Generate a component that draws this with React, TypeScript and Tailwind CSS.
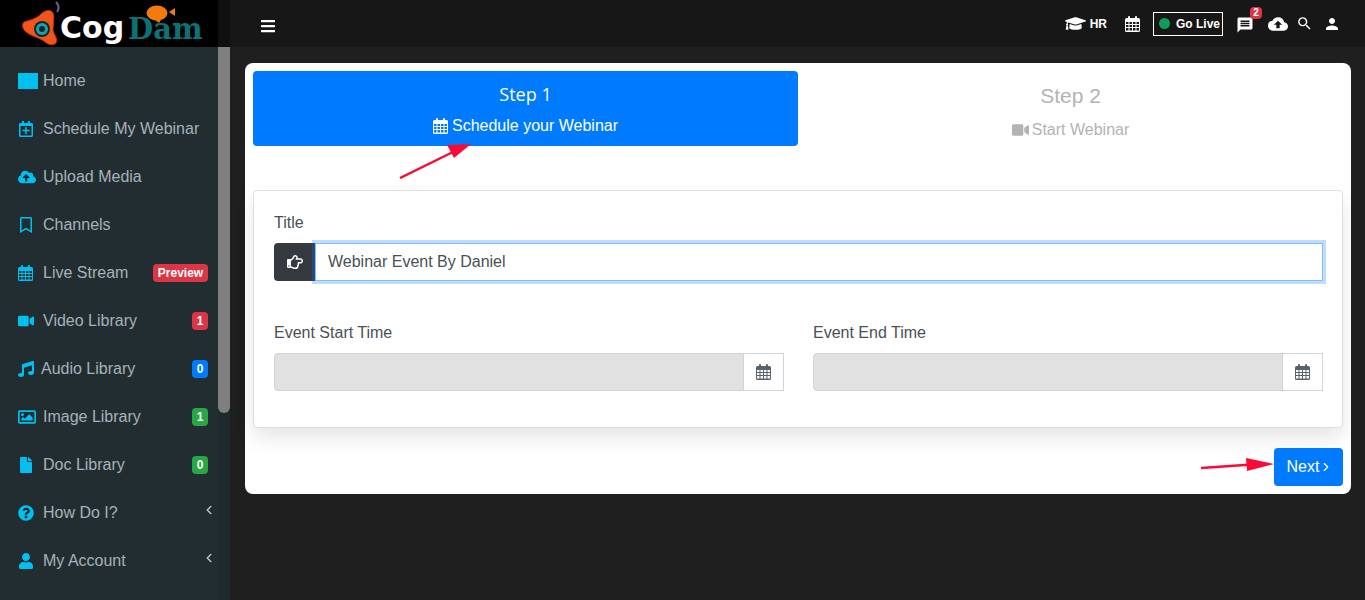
import type { ReactNode } from 'react'
import {
  FaBars,
  FaCloudUploadAlt,
  FaFile,
  FaGraduationCap,
  FaMusic,
  FaQuestionCircle,
  FaRegBookmark,
  FaRegCalendarPlus,
  FaRegHandPointRight,
  FaRegImage,
  FaUser,
  FaVideo,
} from 'react-icons/fa'
import { ChevronLeft, ChevronRight } from 'lucide-react'
import { MdCloudUpload, MdMessage, MdPerson, MdSearch } from 'react-icons/md'

const iconClass = 'w-4 h-4 text-[#00c0ef] shrink-0'

// old font-awesome style calendar, the v5 one has no open grid
function CalendarIcon({ className }: { className?: string }) {
  return (
    <svg viewBox="0 0 15 16" className={className} fill="currentColor">
      <path d="M1.5 2h12A1.5 1.5 0 0 1 15 3.5v11a1.5 1.5 0 0 1-1.5 1.5h-12A1.5 1.5 0 0 1 0 14.5v-11A1.5 1.5 0 0 1 1.5 2z" />
      <rect x="3" y="0" width="2" height="4" rx="1" />
      <rect x="10" y="0" width="2" height="4" rx="1" />
      <path
        d="M1 6h2.5v2H1zM4.5 6H7v2H4.5zM8 6h2.5v2H8zM11.5 6H14v2h-2.5zM1 9h2.5v2H1zM4.5 9H7v2H4.5zM8 9h2.5v2H8zM11.5 9H14v2h-2.5zM1 12h2.5v2.5H1zM4.5 12H7v2.5H4.5zM8 12h2.5v2.5H8zM11.5 12H14v2.5h-2.5z"
        fill="var(--cell)"
      />
    </svg>
  )
}

type NavItem = {
  label: string
  icon: ReactNode
  badge?: string
  badgeClass?: string
  submenu?: boolean
  tight?: boolean
}

const navItems: NavItem[] = [
  { label: 'Home', icon: <span className="w-5 h-4 bg-[#00c0ef] shrink-0" /> },
  { label: 'Schedule My Webinar', icon: <FaRegCalendarPlus className={iconClass} /> },
  { label: 'Upload Media', icon: <FaCloudUploadAlt className="w-[18px] h-[18px] text-[#00c0ef] shrink-0" /> },
  { label: 'Channels', icon: <FaRegBookmark className={iconClass} /> },
  {
    label: 'Live Stream',
    icon: <CalendarIcon className="w-[15px] h-4 text-[#00c0ef] shrink-0 [--cell:#222d32]" />,
    badge: 'Preview',
    badgeClass: 'w-[55px] bg-[#dc3545]',
  },
  { label: 'Video Library', icon: <FaVideo className={iconClass} />, badge: '1', badgeClass: 'w-[16px] bg-[#dc3545]' },
  { label: 'Audio Library', icon: <FaMusic className={iconClass} />, badge: '0', badgeClass: 'w-[16px] bg-[#007bff]', tight: true },
  { label: 'Image Library', icon: <FaRegImage className="w-[18px] h-[18px] text-[#00c0ef] shrink-0" />, badge: '1', badgeClass: 'w-[16px] bg-[#28a745]' },
  { label: 'Doc Library', icon: <FaFile className={iconClass} />, badge: '0', badgeClass: 'w-[16px] bg-[#28a745]' },
  { label: 'How Do I?', icon: <FaQuestionCircle className={iconClass} />, submenu: true },
  { label: 'My Account', icon: <FaUser className={iconClass} />, submenu: true },
]

function Logo() {
  return (
    <div className="relative h-[47px] bg-black flex items-center pl-[20px] overflow-hidden">
      <svg width="40" height="47" viewBox="0 0 40 47" className="shrink-0">
        <path d="M36 2c3 3 3 7 1 10" stroke="#7a5a90" strokeWidth="2" fill="none" />
        <circle cx="30" cy="17" r="2.5" fill="#7a5a90" />
        <path
          d="M4 22C10 20 16 19 21 14 25 10 31 9 33 13 35 18 33 23 33 30 34 35 38 38 36 43 33 46 28 45 24 41 18 37 10 36 5 31 2 28 2 24 4 22z"
          fill="#f0561c"
          stroke="#c92a0e"
        />
        <circle cx="22" cy="29" r="8" fill="#12262c" />
        <circle cx="22" cy="29" r="6" fill="#15a3ad" />
        <circle cx="22" cy="29" r="3" fill="#10242a" />
      </svg>
      <span className="mt-[8px] font-['DejaVu_Sans',sans-serif] font-bold text-[30px] leading-none text-white">Cog</span>
      <span className="ml-[4px] mt-[12px] font-['DejaVu_Serif',serif] font-bold text-[29px] leading-none text-[#0b7376]">Dam</span>
      <svg width="30" height="18" viewBox="0 0 30 18" className="absolute left-[146px] top-[5px]">
        <ellipse cx="11" cy="8" rx="10.5" ry="7.5" fill="#f47a0c" />
        <path d="M8 14l5 4 3-5z" fill="#f47a0c" />
        <path d="M23 7l6-4v8z" fill="#f47a0c" />
      </svg>
    </div>
  )
}

function Sidebar() {
  return (
    <aside className="w-[230px] shrink-0 flex flex-col bg-[#222d32]">
      <div className="flex">
        <div className="w-[218px]">
          <Logo />
        </div>
        <div className="w-[12px] bg-[#101010]" />
      </div>
      <div className="flex flex-1 min-h-0">
        <nav className="w-[218px] pt-[10px] pr-[10px] pl-[18px]">
          {navItems.map((item) => (
            <div key={item.label} className="h-12 flex items-center">
              <div className={`w-[25px] flex ${item.tight ? '-mr-[2px]' : ''}`}>{item.icon}</div>
              <span className="text-base text-[#a6b2b9] flex-1 whitespace-nowrap">{item.label}</span>
              {item.badge && (
                <span className={`h-[18px] rounded flex items-center justify-center text-white text-xs font-bold ${item.badgeClass}`}>
                  {item.badge}
                </span>
              )}
              {item.submenu && <ChevronLeft strokeWidth={2.5} className="w-[14px] h-[14px] text-[#b8c7ce] mb-[6px] -mr-[8px]" />}
            </div>
          ))}
        </nav>
        <div className="w-[12px] bg-[#1f2a2f]">
          <div className="h-[366px] rounded-b-md bg-[#7f7f7f]" />
        </div>
      </div>
    </aside>
  )
}

function TopBar() {
  return (
    <header className="h-[47px] shrink-0 bg-[#171717] flex items-center text-white pl-[31px] pr-[24px]">
      <FaBars className="w-[14px] h-4 mt-[5px]" />
      <div className="ml-auto flex items-center">
        <FaGraduationCap className="w-[21px] h-[21px]" />
        <span className="ml-[4px] text-xs font-bold">HR</span>
        <CalendarIcon className="ml-[18px] w-[15px] h-4 [--cell:#171717]" />
        <div className="ml-[13px] w-[70px] h-[24px] border border-white flex items-center pl-[5px]">
          <span className="w-[11px] h-[11px] rounded-full bg-[#0f9d58]" />
          <span className="ml-[6px] text-xs font-bold">Go Live</span>
        </div>
        <div className="relative ml-[13px]">
          <MdMessage className="w-[18px] h-[18px] mt-[2px]" />
          <span className="absolute -top-[7px] left-[14px] h-[12px] w-[12px] rounded bg-[#dc3545] flex items-center justify-center text-[10px] font-bold">
            2
          </span>
        </div>
        <MdCloudUpload className="ml-[14px] w-[20px] h-[20px]" />
        <MdSearch className="ml-[8px] w-[17px] h-[17px]" />
        <MdPerson className="ml-[10px] w-[18px] h-[18px]" />
      </div>
    </header>
  )
}

function DateField({ label }: { label: string }) {
  return (
    <div className="flex-1">
      <label className="block text-base leading-6 text-[#495057] mb-[8px]">{label}</label>
      <div className="flex h-[38px]">
        <div className="flex-1 bg-[#e1e1e1] border border-[#ced4da] rounded-l" />
        <div className="w-[41px] -ml-px border border-[#ced4da] bg-white flex items-center justify-center">
          <CalendarIcon className="w-[15px] h-4 text-[#59626a] [--cell:#ffffff]" />
        </div>
      </div>
    </div>
  )
}

function Wizard() {
  return (
    <section className="relative h-[431px] rounded-lg bg-white p-2">
      {/* Steps */}
      <div className="flex">
        <div className="flex-1 h-[75px] rounded bg-[#007bff] text-white flex flex-col items-center pt-[11px]">
          <div className="text-lg leading-6 font-['Open_Sans',sans-serif]">Step 1</div>
          <div className="mt-[8px] flex items-center gap-[4px] text-base leading-6">
            <CalendarIcon className="w-[15px] h-4 [--cell:#007bff]" />
            Schedule your Webinar
          </div>
        </div>
        <div className="flex-1 h-[75px] text-[#b3b3b3] flex flex-col items-center pt-[11px]">
          <div className="text-[21px] leading-7">Step 2</div>
          <div className="mt-[8px] flex items-center gap-[3px] text-base leading-6">
            <FaVideo className="w-[17px] h-4" />
            Start Webinar
          </div>
        </div>
      </div>

      {/* Form */}
      <div className="mt-[44px] h-[238px] border border-[#dfdfdf] rounded bg-white shadow-[0_10px_20px_rgba(0,0,0,0.1)] pl-[20px] pr-[19px] pt-[20px]">
        <label className="block text-base leading-6 text-[#495057] mb-[8px]">Title</label>
        <div className="flex h-[38px]">
          <div className="w-[41px] rounded-l bg-[#343a40] text-white flex items-center justify-center">
            <FaRegHandPointRight className="w-4 h-4" />
          </div>
          <input
            readOnly
            value="Webinar Event By Daniel"
            className="flex-1 h-[38px] px-[12px] bg-white border border-[#80bdff] shadow-[0_0_0_3px_rgba(0,123,255,0.25)] text-base text-[#495057] outline-none"
          />
        </div>
        <div className="mt-[40px] flex gap-[29px]">
          <DateField label="Event Start Time" />
          <DateField label="Event End Time" />
        </div>
      </div>

      <div className="mt-[20px] flex justify-end">
        <button className="w-[69px] h-[38px] pl-[3px] rounded bg-[#007bff] text-white text-base flex items-center justify-center">
          Next
          <ChevronRight strokeWidth={2} className="w-[14px] h-[14px]" />
        </button>
      </div>

      {/* Annotation arrows */}
      <svg width="80" height="40" viewBox="0 0 80 40" className="absolute left-[150px] top-[76px]">
        <path d="M5 39L60 12" stroke="#fb0a37" strokeWidth="2.5" />
        <path d="M76 5L52 6l7 13z" fill="#fb0a37" />
      </svg>
      <svg width="76" height="20" viewBox="0 0 76 20" className="absolute left-[955px] top-[393px]">
        <path d="M1 12L52 8.5" stroke="#fb0a37" strokeWidth="2.5" />
        <path d="M74 8L46 2l1 13z" fill="#fb0a37" />
      </svg>
    </section>
  )
}

export default function App() {
  return (
    <div className="flex h-[600px] w-[1365px] overflow-hidden bg-[#1f1f1f] font-['Liberation_Sans',Arial,sans-serif]">
      <Sidebar />
      <main className="flex-1 flex flex-col min-w-0">
        <TopBar />
        <div className="pt-[16px] pl-[15px] pr-[14px]">
          <Wizard />
        </div>
      </main>
    </div>
  )
}
